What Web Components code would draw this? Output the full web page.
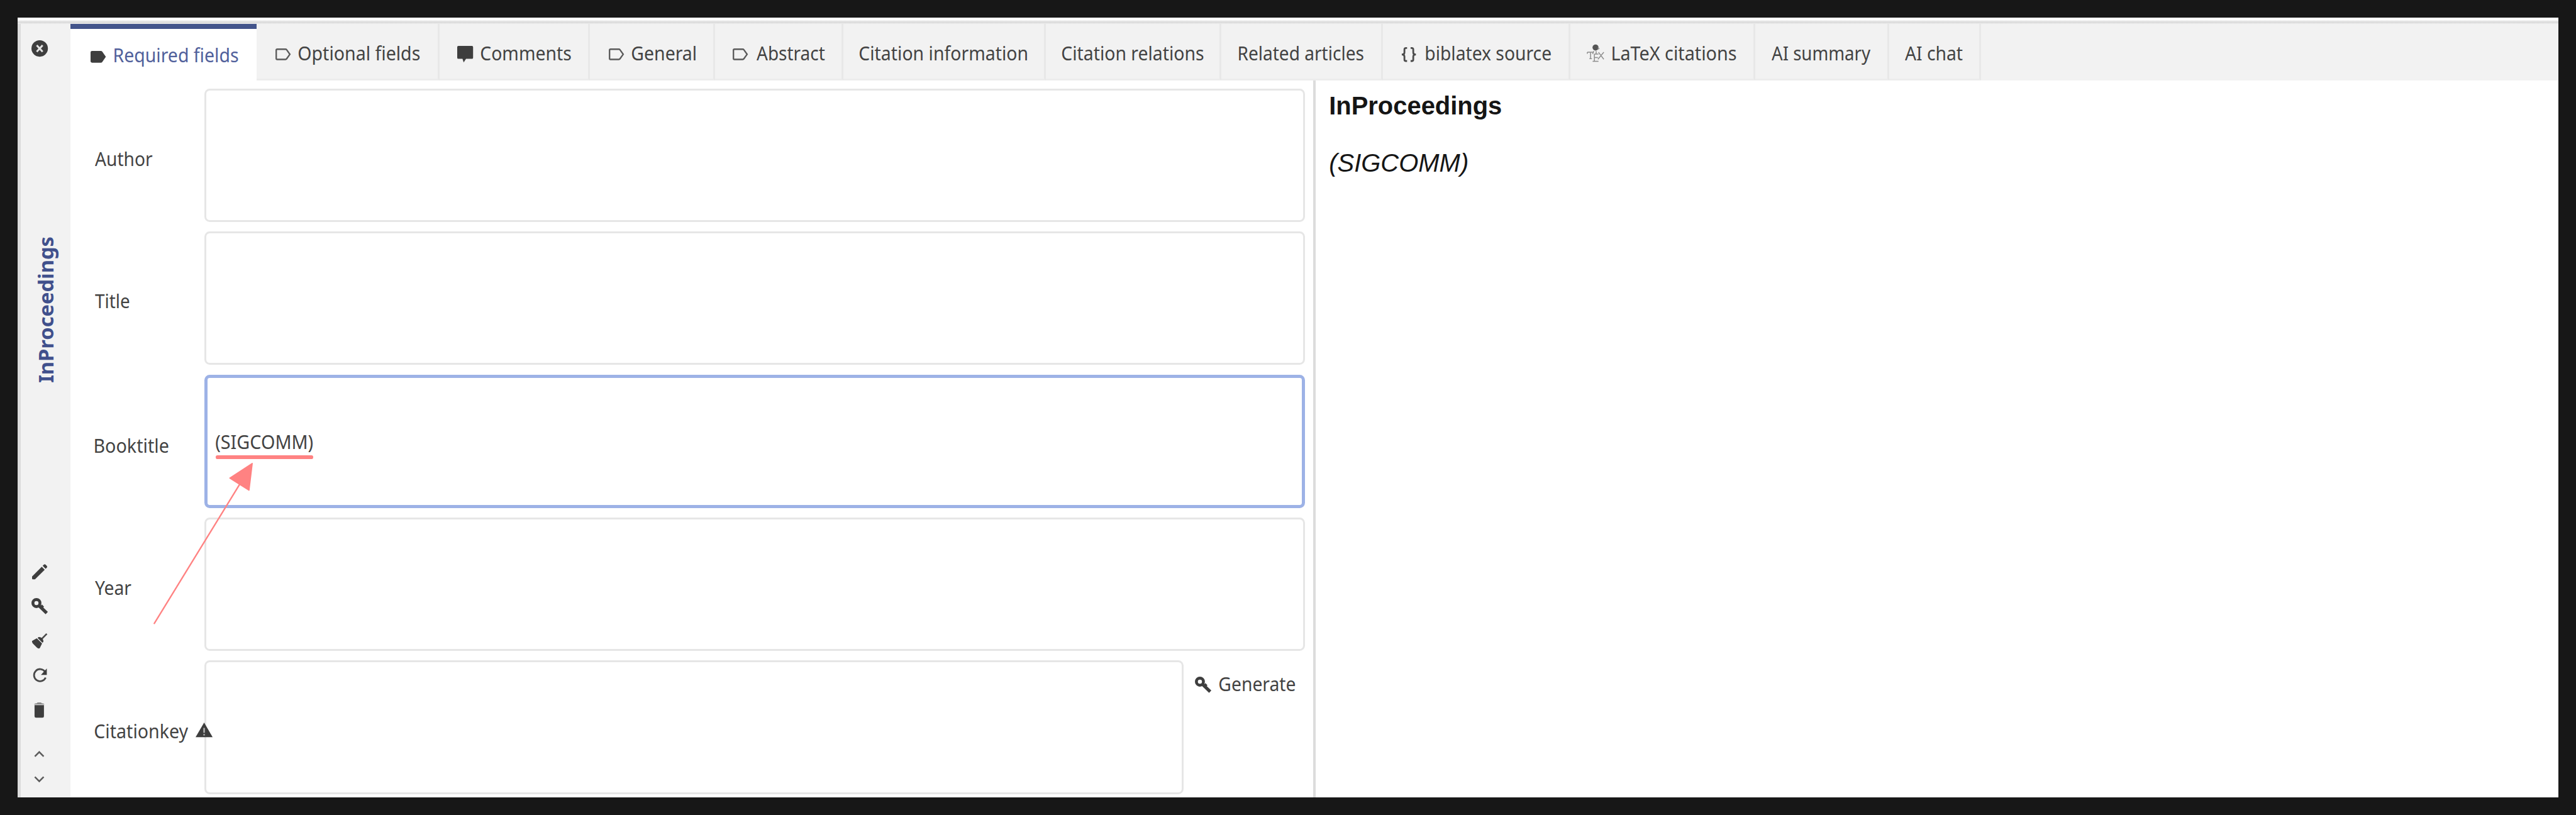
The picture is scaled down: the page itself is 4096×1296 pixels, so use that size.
<!DOCTYPE html>
<html lang="en">
<head>
<meta charset="utf-8">
<title>Entry editor</title>
<style>
/* 1rem stands for 100 design units */
html { font-size: 93.516px; }
body { margin: 0; background: #171717; overflow: hidden; font-family: "Noto Sans", sans-serif; color: #434343; }
</style>
</head>
<body>
<entry-editor></entry-editor>
<script>
const r = n => (n / 100) + 'rem';

const ICONS = {
  close: [28, 28, '<circle cx="14" cy="14" r="14" fill="#3e3e3e"/><path d="M9 8.5 19 19.5M19 8.5 9 19.5" stroke="#e4e4e4" stroke-width="3.2"/>'],
  tag: [26, 20, '<path d="M2.500 0H17.500Q19 0 20 1.300L26 10 20 18.700Q19 20 17.500 20H2.500Q0 20 0 17.500V2.500Q0 0 2.500 0Z" fill="#3e3e3e"/>'],
  tagOutline: [26, 20, '<path d="M3 1.300H17Q18.300 1.300 19 2.300L24.500 10 19 17.700Q18.300 18.700 17 18.700H3Q1.300 18.700 1.300 17V3Q1.300 1.300 3 1.300Z" fill="none" stroke="#5a5a5a" stroke-width="2.500"/>'],
  comment: [27, 28, '<path d="M2 0H25Q27 0 27 2V20Q27 22 25 22H15L11 28 9 22H2Q0 22 0 20V2Q0 0 2 0Z" fill="#3e3e3e"/>'],
  braces: [26, 25, '<path d="M10 1.500H8Q5.500 1.500 5.500 4V9Q5.500 12.500 1 12.500 5.500 12.500 5.500 16V21Q5.500 23.500 8 23.500H10M16 1.500H18Q20.500 1.500 20.500 4V9Q20.500 12.500 25 12.500 20.500 12.500 20.500 16V21Q20.500 23.500 18 23.500H16" fill="none" stroke="#4b4b4b" stroke-width="3"/>'],
  tex: [31, 31, '<circle cx="15" cy="6" r="5.200" fill="#555"/><path d="M19 4 22 8 19 10Z" fill="#999"/><g fill="none" stroke="#8d8d8d" stroke-width="1.600"><path d="M1 14H12M6.500 14V25M4.500 25H9M1 14V16.500M20 14 29 26M29 14 19 26M13 17V30M13 17H20M13 23H19M10 29.500H20M16 12V17M12 12 10 17"/></g>'],
  pencil: [26, 26, '<path d="M0 21 16.500 4.500 21.500 9.500 5 26H1.500Q0 26 0 24.500ZM18 3 20.200.800Q21.500-.400 22.800.800L25.200 3.200Q26.400 4.500 25.200 5.800L23 8Z" fill="#3e3e3e"/>'],
  key: [28, 28, '<circle cx="8.500" cy="8.500" r="6" fill="none" stroke="#3e3e3e" stroke-width="5"/><path d="M13 13 26 25.500" stroke="#3e3e3e" stroke-width="5.500"/><path d="M16.500 12.500 20 16" stroke="#3e3e3e" stroke-width="4"/>'],
  broom: [26, 26, '<path d="M25 1 16 10" stroke="#4a4a4a" stroke-width="2.800"/><path d="M11 6.500Q14.500 6 17 8.500 20 11.500 19 15L17.500 16 9.500 8ZM8 8.500 17 17.500 13 25.500Q11 26.500 8.500 24.500L1 17Q-.500 14.500 0 13Z" fill="#3e3e3e"/>'],
  refresh: [24, 24, '<path d="M21 5.500A10.300 10.300 0 1 0 22 15.500" fill="none" stroke="#4a4a4a" stroke-width="3"/><path d="M24 0V11H14Z" fill="#3e3e3e"/>'],
  trash: [18, 26, '<path d="M0 3.500Q1 1.500 5 1.300L6 0H12L13 1.300Q17 1.500 18 3.500Z" fill="#8a8a8a"/><path d="M1 4.500H17V23.500Q17 26 14.500 26H3.500Q1 26 1 23.500Z" fill="#3e3e3e"/>'],
  up: [18, 11, '<path d="M1.500 9.500 9 2 16.500 9.500" fill="none" stroke="#5c5c5c" stroke-width="2.700"/>'],
  down: [18, 11, '<path d="M1.500 1.500 9 9 16.500 1.500" fill="none" stroke="#5c5c5c" stroke-width="2.700"/>'],
  warning: [29, 25, '<path d="M14.500 0 29 25H0Z" fill="#3e3e3e"/><path d="M14.500 9V17.500M14.500 19.500V22" stroke="#a5a5a5" stroke-width="3"/>']
};

class UiIcon extends HTMLElement {
  connectedCallback() {
    const [w, h, body] = ICONS[this.getAttribute('name')];
    this.attachShadow({ mode: 'open' }).innerHTML =
      `<style>:host{display:block;flex:none;width:${r(w)};height:${r(h)}}svg{display:block;width:100%;height:100%;overflow:visible}</style>
       <svg viewBox="0 0 ${w} ${h}" aria-hidden="true">${body}</svg>`;
  }
}

/* A single line of text whose inked width is set to a given measure. */
class FitText extends HTMLElement {
  connectedCallback() {
    const text = this.getAttribute('text'), w = +this.getAttribute('width'), size = +this.getAttribute('size') || 33;
    const family = this.getAttribute('family') || 'Noto Sans';
    const style = this.getAttribute('face') || '';
    const c = document.createElement('canvas').getContext('2d');
    c.font = `${style} ${size}px "${family}"`;
    const m = c.measureText(text);
    const left = -m.actualBoundingBoxLeft, ink = m.actualBoundingBoxRight - left;
    const k = w / ink;
    this.attachShadow({ mode: 'open' }).innerHTML =
      `<style>:host{display:block;flex:none;width:${r(w)};line-height:${r(46)};height:${r(46)};white-space:nowrap;font:${style} ${r(size)}/${r(46)} "${family}",sans-serif}
       span{display:block;width:0;transform-origin:0 50%;transform:translateX(${r(-left * k)}) scaleX(${k})}</style><span>${text}</span>`;
  }
}

class EditorTab extends HTMLElement {
  connectedCallback() {
    const a = n => this.getAttribute(n), on = this.hasAttribute('active');
    const icon = a('icon');
    this.attachShadow({ mode: 'open' }).innerHTML =
      `<style>:host{display:flex;flex:none;box-sizing:border-box;align-items:center;width:${r(+a('w'))};height:${r(96)};
         padding-left:${r(+a('pad'))};padding-top:${r(on ? 2 : 6)};
         ${on ? 'background:#fff;color:#50609b;border-top:' + r(9) + ' solid #43548b;' : 'border-right:' + r(4) + ' solid #e8e8e8;border-bottom:' + r(3.5) + ' solid #ececec;'}}
       ui-icon{margin-right:${r(+a('gap') || 0)};margin-top:${r(+a('drop') || 0)}}</style>
       ${icon ? `<ui-icon name="${icon}"></ui-icon>` : ''}<fit-text text="${a('text')}" width="${a('tw')}"></fit-text>`;
  }
}

class TabBar extends HTMLElement {
  connectedCallback() {
    // text, tab width, left padding, text width, icon, icon gap, icon drop
    const tabs = [
      ['Required fields', 316, 34, 210.5, 'tag', 14.500, 5],
      ['Optional fields', 311.500, 32.500, 206, 'tagOutline', 13, 5],
      ['Comments', 256, 30, 153, 'comment', 13.500, 4],
      ['General', 212, 31.500, 108, 'tagOutline', 14, 5],
      ['Abstract', 218, 30.500, 116.500, 'tagOutline', 14, 5],
      ['Citation information', 345, 28, 284.500],
      ['Citation relations', 298.500, 27.500, 240.500],
      ['Related articles', 275, 30, 212],
      ['biblatex source', 318, 31, 212.500, 'braces', 15.500, 5],
      ['LaTeX citations', 315, 27.500, 210.500, 'tex', 13, 0],
      ['AI summary', 227, 27, 168],
      ['AI chat', 157, 27.500, 98.500]
    ];
    this.attachShadow({ mode: 'open' }).innerHTML =
      `<style>:host{display:flex;flex:none;background:#f2f2f2;height:${r(96)}}</style>` +
      tabs.map(([t, w, p, tw, i, g, d], n) =>
        `<editor-tab ${n ? '' : 'active'} text="${t}" w="${w}" pad="${p}" tw="${tw}" ${i ? `icon="${i}" gap="${g}" drop="${d}"` : ''}></editor-tab>`).join('');
  }
}

class SideBar extends HTMLElement {
  connectedCallback() {
    const list = [['pencil', 310.500], ['key', 31.500], ['broom', 31.500], ['refresh', 34], ['trash', 34], ['up', 56.500], ['down', 32]];
    this.attachShadow({ mode: 'open' }).innerHTML =
      `<style>:host{display:flex;flex-direction:column;flex:none;align-items:center;box-sizing:border-box;width:${r(90)};
         border-left:${r(5.500)} solid #dcdcdc;padding:${r(27.500)} ${r(21)} 0 0;background:#f2f2f2}
       .type{display:block;flex:none;width:${r(40)};height:${r(247)};margin:${r(306)} ${r(-12)} 0 ${r(12)};overflow:visible}
       text{font:bold 35px "Noto Sans",sans-serif;fill:#40508c}</style>
       <ui-icon name="close"></ui-icon>
       <svg class="type" viewBox="0 0 40 247"><text transform="translate(32.500 249) rotate(-90)" textLength="249" lengthAdjust="spacingAndGlyphs">InProceedings</text></svg>` +
      list.map(([n, m]) => `<ui-icon name="${n}" style="margin-top:${r(m)}"></ui-icon>`).join('');
  }
}

class FieldRow extends HTMLElement {
  connectedCallback() {
    const a = n => this.getAttribute(n), focus = this.hasAttribute('focused');
    this.attachShadow({ mode: 'open' }).innerHTML =
      `<style>:host{display:flex;flex:none;height:${r(227)}}
       .label{display:flex;flex:none;align-items:center;box-sizing:border-box;width:${r(228)};padding-left:${r(42)};padding-top:${r(+a('shift'))}}
       .label ui-icon{position:relative;z-index:1;margin:0 ${r(-20)} ${r(2)} ${r(12)}}
       .box{display:flex;flex:1;align-items:center;box-sizing:border-box;background:#fff;border:${r(focus ? 5.500 : 4)} solid ${focus ? '#9db2e6' : '#e6e6e6'};border-radius:${r(9)};padding-left:${r(14)}}</style>
       <div class="label"><fit-text text="${a('label')}" width="${a('tw')}" size="34"></fit-text>${this.hasAttribute('warn') ? '<ui-icon name="warning"></ui-icon>' : ''}</div>
       <div class="box"><slot></slot></div><slot name="action"></slot>`;
  }
}

class MarkedValue extends HTMLElement {
  connectedCallback() {
    this.attachShadow({ mode: 'open' }).innerHTML =
      `<style>:host{display:flex;flex-direction:column;margin-top:${r(7)}}
       i{display:block;height:${r(6)};border-radius:${r(3)};background:#ff8282;margin-top:${r(1)}}</style>
       <fit-text text="(SIGCOMM)" width="165" size="34"></fit-text><i></i>`;
  }
}

class GenerateButton extends HTMLElement {
  connectedCallback() {
    this.attachShadow({ mode: 'open' }).innerHTML =
      `<style>:host{display:flex;flex:none;align-items:flex-start;box-sizing:border-box;width:${r(207)};padding:${r(16)} 0 0 ${r(20)}}
       ui-icon{margin:${r(11)} ${r(13.500)} 0 0}</style>
       <ui-icon name="key"></ui-icon><fit-text text="Generate" width="129" size="34"></fit-text>`;
  }
}

class EntryPreview extends HTMLElement {
  connectedCallback() {
    this.attachShadow({ mode: 'open' }).innerHTML =
      `<style>:host{display:flex;flex-direction:column;flex:1;gap:${r(50.700)};background:#fff;border-left:${r(5)} solid #dcdcdc;padding:${r(21)} 0 0 ${r(24.500)};color:#151515}</style>
       <fit-text text="InProceedings" width="291" size="44" family="Liberation Sans" face="bold"></fit-text>
       <fit-text text="(SIGCOMM)" width="234" size="44" family="Liberation Sans" face="italic"></fit-text>`;
  }
}

class PointerArrow extends HTMLElement {
  connectedCallback() {
    this.attachShadow({ mode: 'open' }).innerHTML =
      `<style>:host{display:block;position:absolute;left:${r(260)};top:${r(780)};width:${r(180)};height:${r(290)};z-index:2}
       svg{display:block;width:100%;height:100%}</style>
       <svg viewBox="260 780 180 290" fill="#ff8282" stroke="#ff8282" stroke-linejoin="round" stroke-linecap="round">
       <path d="M407 825 262.500 1060.500" stroke-width="2.500"/><path d="M429 788.500 391 813.500 423.500 834Z" stroke-width="2"/></svg>`;
  }
}

class EntryEditor extends HTMLElement {
  connectedCallback() {
    this.attachShadow({ mode: 'open' }).innerHTML =
      `<style>:host{display:flex;flex-direction:column;box-sizing:border-box;width:4096px;height:1296px;padding:${r(30)};background:#171717}
       .edge{flex:none;height:${r(10.700)};background:linear-gradient(#fff 0 35%,#e2e2e2 60%,#dadada 80%,#efefef)}
       .frame{display:flex;flex:1;min-height:0;background:#fff;overflow:hidden}
       .main{display:flex;flex-direction:column;flex:1;min-width:0}
       .content{display:flex;flex:1;min-height:0}
       .form{display:flex;flex-direction:column;flex:none;box-sizing:border-box;width:${r(2112.500)};padding:${r(13.800)} ${r(13.500)} 0 0;gap:${r(16.200)}}</style>
       <div class="edge"></div>
       <div class="frame">
         <side-bar></side-bar>
         <div class="main">
           <tab-bar></tab-bar>
           <div class="content">
             <div class="form">
               <field-row label="Author" tw="98" shift="10"></field-row>
               <field-row label="Title" tw="58.500" shift="8"></field-row>
               <field-row label="Booktitle" tw="125" shift="12" focused><marked-value></marked-value></field-row>
               <field-row label="Year" tw="62" shift="10"></field-row>
               <field-row label="Citationkey" tw="159" shift="10" warn><generate-button slot="action"></generate-button></field-row>
             </div>
             <entry-preview></entry-preview>
           </div>
         </div>
       </div>
       <pointer-arrow></pointer-arrow>`;
  }
}

customElements.define('ui-icon', UiIcon);
customElements.define('fit-text', FitText);
customElements.define('editor-tab', EditorTab);
customElements.define('tab-bar', TabBar);
customElements.define('side-bar', SideBar);
customElements.define('field-row', FieldRow);
customElements.define('marked-value', MarkedValue);
customElements.define('generate-button', GenerateButton);
customElements.define('entry-preview', EntryPreview);
customElements.define('pointer-arrow', PointerArrow);
customElements.define('entry-editor', EntryEditor);
</script>
</body>
</html>
